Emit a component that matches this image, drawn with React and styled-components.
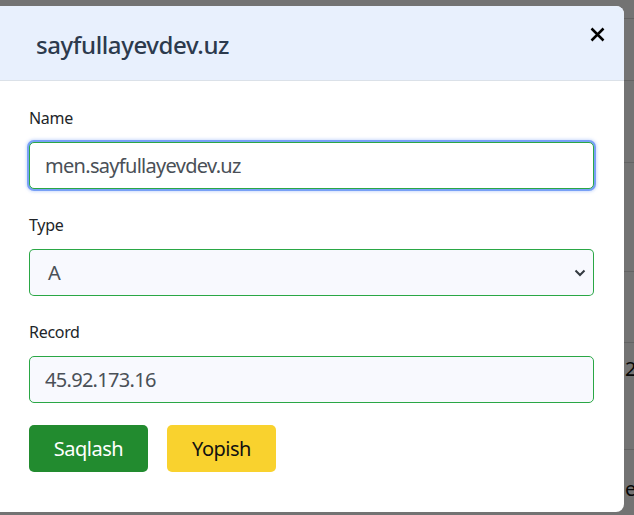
import React from "react";
import styled, { createGlobalStyle, css } from "styled-components";

const GlobalStyle = createGlobalStyle`
  html, body { margin: 0; padding: 0; background: #ffffff; }
  body { font-family: "Noto Sans", "Open Sans", sans-serif; color: #212529; overflow: hidden; }
  * { box-sizing: border-box; }
`;

const Stage = styled.div`
  position: relative;
  width: 634px;
  height: 515px;
  overflow: hidden;
`;

const BehindTable = styled.div`
  display: grid;
  grid-template-columns: 625px 1fr;
`;

const BehindRow = styled.div`
  grid-column: 1 / -1;
  display: grid;
  grid-template-columns: 625px 1fr;
  height: ${(p) => p.$h}px;
  border-bottom: 1px solid #dcdcdc;
  align-items: center;
  font-size: 20px;
  color: #111;
`;

const BehindCell = styled.div`
  grid-column: 2;
  white-space: nowrap;
  transform: translateY(${(p) => p.$dy || 0}px);
`;

const Backdrop = styled.div`
  position: absolute;
  inset: 0;
  background: rgba(0, 0, 0, 0.55);
`;

const Modal = styled.div`
  position: absolute;
  top: 6px;
  left: -10px;
  width: 634px;
  background: #fff;
  border-radius: 8px;
  overflow: hidden;
`;

const Header = styled.div`
  display: flex;
  justify-content: space-between;
  align-items: flex-start;
  padding: 24px 19px 21px 46px;
  background: #e8f0fd;
  border-bottom: 1px solid #dbe1e8;
`;

const Title = styled.h5`
  margin: 0;
  font-size: 24px;
  line-height: 29px;
  font-weight: 500;
  color: #2c3a4d;
  letter-spacing: -0.4px;
`;

const CloseButton = styled.button`
  border: 0;
  background: transparent;
  padding: 0;
  margin-top: -3px;
  width: 15px;
  height: 15px;
  display: flex;
  cursor: pointer;
`;

const Body = styled.div`
  display: flex;
  flex-direction: column;
  gap: 24px;
  padding: 25px 30px 40px 39px;
`;

const Group = styled.div`
  display: flex;
  flex-direction: column;
  gap: 12px;
`;

const Label = styled.label`
  font-size: 16px;
  line-height: 24px;
  color: #212529;
  letter-spacing: -0.3px;
`;

const fieldText = css`
  font-family: "Noto Sans", "Open Sans", sans-serif;
  font-size: 20px;
  color: #4a5057;
  letter-spacing: -0.7px;
  outline: none;
`;

const TextInput = styled.input`
  ${fieldText}
  width: 100%;
  height: 47px;
  border: 1px solid #2aa745;
  border-radius: 5px;
  padding: 0 15px;
  background: ${(p) => (p.$focused ? "#ffffff" : "#f8f9fe")};
  box-shadow: ${(p) =>
    p.$focused
      ? "0 0 0 2px #78a0f6, 0 0 3px 3px rgba(120,160,246,0.35)"
      : "none"};
`;

const SelectBox = styled.div`
  ${fieldText}
  display: flex;
  align-items: center;
  justify-content: space-between;
  height: 47px;
  padding: 0 8px 0 19px;
  border: 0;
  box-shadow: inset 0 0 0 1px #2aa745;
  border-radius: 5px;
  background-color: #f8f9fe;
  cursor: pointer;
`;

const SelectValue = styled.span`
  line-height: 1;
`;

const Actions = styled.div`
  display: flex;
  gap: 19px;
  margin-top: -2px;
`;

const Button = styled.button`
  width: ${(p) => p.$w}px;
  height: 47px;
  border: 0;
  border-radius: 5px;
  font-family: "Noto Sans", "Open Sans", sans-serif;
  font-size: 20px;
  letter-spacing: -0.5px;
  background: ${(p) => p.$bg};
  color: ${(p) => p.$fg};
  cursor: pointer;
  padding: 0;
`;

export default function App() {
  return (
    <Stage>
      <GlobalStyle />
      <BehindTable>
        <BehindRow $h={19} />
        <BehindRow $h={62} />
        <BehindRow $h={82} />
        <BehindRow $h={109} />
        <BehindRow $h={71} />
        <BehindRow $h={107}>
          <BehindCell $dy={-28}>2</BehindCell>
        </BehindRow>
        <BehindRow $h={70}>
          <BehindCell $dy={4}>e</BehindCell>
        </BehindRow>
      </BehindTable>
      <Backdrop />
      <Modal>
        <Header>
          <Title>sayfullayevdev.uz</Title>
          <CloseButton aria-label="close">
            <svg width="15" height="15" viewBox="0 0 15 15">
              <path
                d="M1.5 1.5 L13.5 13.5 M13.5 1.5 L1.5 13.5"
                stroke="#000"
                strokeWidth="2.5"
                strokeLinecap="butt"
              />
            </svg>
          </CloseButton>
        </Header>
        <Body>
          <Group>
            <Label>Name</Label>
            <TextInput $focused defaultValue="men.sayfullayevdev.uz" />
          </Group>
          <Group>
            <Label>Type</Label>
            <SelectBox role="combobox" aria-expanded="false">
              <SelectValue>A</SelectValue>
              <svg width="12" height="8" viewBox="0 0 12 8">
                <path
                  d="M1.5 1.5 L6 6 L10.5 1.5"
                  fill="none"
                  stroke="#343a40"
                  strokeWidth="2"
                />
              </svg>
            </SelectBox>
          </Group>
          <Group>
            <Label>Record</Label>
            <TextInput defaultValue="45.92.173.16" />
          </Group>
          <Actions>
            <Button $w={119} $bg="#228b2f" $fg="#ffffff">Saqlash</Button>
            <Button $w={109} $bg="#f9d22e" $fg="#111111">Yopish</Button>
          </Actions>
        </Body>
      </Modal>
    </Stage>
  );
}
